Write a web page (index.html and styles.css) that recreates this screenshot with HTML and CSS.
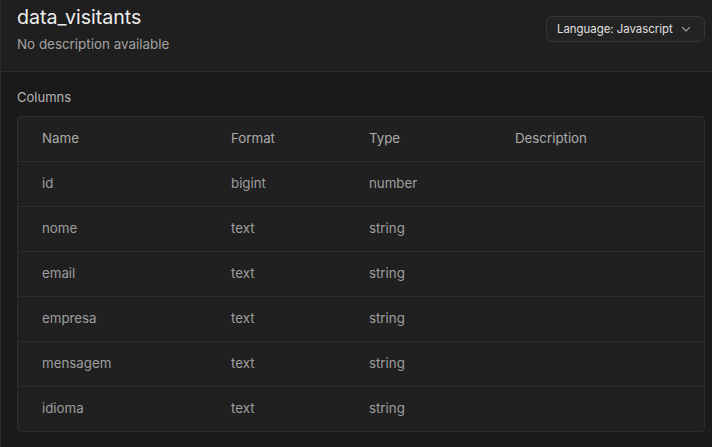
FILE: index.html
```html
<!DOCTYPE html>
<html>
<head>
<meta charset="utf-8">
<link rel="stylesheet" href="styles.css">
</head>
<body>
<div class="page">
  <header class="head">
    <div class="titles">
      <h1 class="title">data_visitants</h1>
      <p class="desc">No description available</p>
    </div>
    <button class="lang">
      <span>Language: Javascript</span>
      <svg width="12" height="12" viewBox="0 0 12 12"><path d="M2.5 4.5 L6 8 L9.5 4.5" fill="none" stroke="#9a9a9a" stroke-width="1.1" stroke-linecap="round" stroke-linejoin="round"/></svg>
    </button>
  </header>
  <section class="content">
    <div class="label">Columns</div>
    <div class="table">
      <div class="row hrow"><div>Name</div><div>Format</div><div>Type</div><div>Description</div></div>
      <div class="row"><div>id</div><div>bigint</div><div>number</div><div></div></div>
      <div class="row"><div>nome</div><div>text</div><div>string</div><div></div></div>
      <div class="row"><div>email</div><div>text</div><div>string</div><div></div></div>
      <div class="row"><div>empresa</div><div>text</div><div>string</div><div></div></div>
      <div class="row"><div>mensagem</div><div>text</div><div>string</div><div></div></div>
      <div class="row"><div>idioma</div><div>text</div><div>string</div><div></div></div>
    </div>
  </section>
</div>
</body>
</html>
```

FILE: styles.css
```css
* { box-sizing: border-box; }
html, body { margin: 0; padding: 0; background: #1a1a1a; }
body { font-family: Inter, "Noto Sans", sans-serif; }
.page {
  border-left: 1px solid #2c2c2c;
  min-height: 447px;
  background: #1a1a1a;
}
.head {
  height: 72px;
  background: #1f1f1f;
  border-bottom: 1px solid #2e2e2e;
  display: flex;
  justify-content: space-between;
  align-items: flex-start;
  padding: 0 7px 0 16px;
}
.title {
  margin: 4px 0 0;
  font-size: 19.6px;
  font-weight: 400;
  color: #ededed;
  line-height: 26px;
}
.desc {
  margin: 5px 0 0;
  font-size: 13.4px;
  color: #a3a3a3;
  line-height: 18px;
}
.lang {
  margin-top: 16px;
  height: 26px;
  width: 159px;
  display: flex;
  align-items: center;
  justify-content: space-between;
  padding: 0 12px 0 10px;
  background: #232323;
  border: 1px solid #363636;
  border-radius: 6px;
  color: #e0e0e0;
  font-family: Inter, "Noto Sans", sans-serif;
  font-size: 11.4px;
}
.content {
  padding: 17px 7px 0 16px;
}
.label {
  font-size: 13px;
  color: #b5b5b5;
  line-height: 16px;
  margin-bottom: 11px;
}
.table {
  background: #202020;
  border: 1px solid #2e2e2e;
  border-radius: 4px;
}
.row {
  display: grid;
  grid-template-columns: 189px 138px 146px 1fr;
  height: 45px;
  align-items: center;
  padding-left: 24px;
  padding-bottom: 2px;
  border-top: 1px solid #2e2e2e;
  font-size: 13.3px;
  color: #9e9e9e;
}
.row.hrow {
  border-top: none;
  height: 44px;
  padding-bottom: 2px;
  color: #ababab;
}
```
